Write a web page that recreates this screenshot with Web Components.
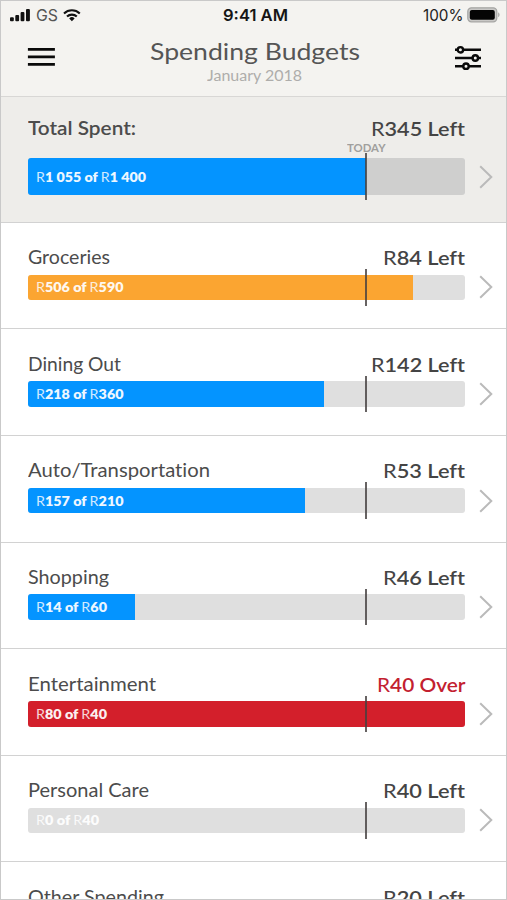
<!DOCTYPE html>
<html lang="en">
<head>
<meta charset="utf-8">
<title>Spending Budgets</title>
<style>
html, body { margin: 0; padding: 0; }
body { width: 507px; height: 900px; overflow: hidden; background: #fff; font-family: Lato, "Open Sans", sans-serif; color: #484848; font-variant-ligatures: none; }
</style>
</head>
<body>
<budget-app></budget-app>
<script>
/* Text run that is widened or narrowed to span a given width. */
class FitText extends HTMLElement {
  constructor() {
    super();
    this.attachShadow({ mode: 'open' }).innerHTML =
      '<style>:host{display:inline-block;white-space:nowrap;text-align:left}span{display:inline-block;transform-origin:0 50%}</style><span><slot></slot></span>';
  }
  connectedCallback() {
    const w = parseFloat(this.getAttribute('w'));
    if (!w) return;
    const span = this.shadowRoot.querySelector('span');
    const natural = span.getBoundingClientRect().width;
    if (!natural) return;
    span.style.transform = 'scaleX(' + w / natural + ')';
    this.style.width = w + 'px';
  }
}

class StatusBar extends HTMLElement {
  constructor() {
    super();
    this.attachShadow({ mode: 'open' }).innerHTML = `
<style>
:host { display: grid; grid-template-columns: 1fr auto 1fr; align-items: center; height: 26px; padding: 0 7px 0 10px; font: 16px/26px Inter, "Liberation Sans", sans-serif; color: #222; }
div { display: flex; align-items: center; }
.l { gap: 5px; } .r { justify-content: flex-end; gap: 4px; }
.gs { color: #555; } .t { font-weight: 600; color: #151515; }
svg { display: block; }
</style>
<div class="l">
  <svg width="21" height="14" fill="#111"><rect x="0" y="9.3" width="3.8" height="4" rx="1"/><rect x="5.3" y="7" width="3.8" height="6.3" rx="1"/><rect x="10.6" y="4" width="3.8" height="9.3" rx="1"/><rect x="16" y="1" width="3.9" height="12.3" rx="1"/></svg>
  <fit-text class="gs" w="22">GS</fit-text>
  <svg width="18" height="14" viewBox="0 0 18 14" fill="none" stroke="#111" stroke-width="2.1"><path d="M1 5.4a11.6 11.6 0 0 1 15.8 0M4 8.6a7 7 0 0 1 9.8 0"/><path d="M8.9 13.2 6.2 10.4a3.9 3.9 0 0 1 5.4 0z" fill="#111" stroke="none"/></svg>
</div>
<div class="t"><fit-text w="65">9:41 AM</fit-text></div>
<div class="r">
  <fit-text w="40.5">100%</fit-text>
  <svg width="33" height="16"><rect x=".8" y=".8" width="29" height="14" rx="3.6" fill="#c9c8c6" stroke="#a5a5a3" stroke-width="1.2"/><rect x="2.8" y="2.9" width="25" height="9.8" rx="2" fill="#050505"/><path d="M31.2 5.2a3 3 0 0 1 0 5z" fill="#a5a5a3"/></svg>
</div>`;
  }
}

class NavBar extends HTMLElement {
  constructor() {
    super();
    this.attachShadow({ mode: 'open' }).innerHTML = `
<style>
:host { display: grid; grid-template-columns: 28px 1fr 28px; padding: 0 25px 0 27px; height: 68.5px; box-sizing: border-box; }
svg { display: block; }
.m { text-align: center; }
.h { font-size: 24px; line-height: 28px; padding-top: 8.5px; color: #555; }
.s { font-size: 14.5px; line-height: 16px; padding-top: 3px; color: #aeadab; }
</style>
<svg width="28" height="50" stroke="#0a0a0a" stroke-width="2.7"><path d="M.9 21.3h27M.9 28.8h27M.9 36.4h27"/></svg>
<div class="m"><div class="h"><fit-text w="210">Spending Budgets</fit-text></div><div class="s"><fit-text w="95">January 2018</fit-text></div></div>
<svg width="28" height="50" stroke="#0a0a0a" stroke-width="2.4" fill="#f4f3f0"><path d="M1 21.8h26M1 30h26M1 38.2h26"/><circle cx="6.4" cy="21.8" r="2.7"/><circle cx="21.3" cy="30" r="2.7"/><circle cx="12" cy="38.2" r="2.7"/></svg>`;
  }
}

class BudgetRow extends HTMLElement {
  connectedCallback() {
    const g = k => this.getAttribute(k);
    const total = this.hasAttribute('total');
    const money = s => s.replace(/R(?=\d)/g, '<i>R</i>');
    this.attachShadow({ mode: 'open' }).innerHTML = `
<style>
:host { display: grid; grid-template-columns: 437px auto; grid-template-rows: 51.9px 25.5px; column-gap: 14px; height: 106.6px; box-sizing: border-box; padding-left: 28px; border-bottom: 1.6px solid #d2d2d2; flex: none; }
:host([total]) { grid-template-rows: 61.9px 36.4px; height: 126.3px; background: #eeedea; }
.top { display: flex; justify-content: space-between; align-items: flex-start; padding-top: 20.4px; font-size: 20px; line-height: 26px; }
:host([total]) .top { padding-top: 17px; }
.name { color: #4c4c4c; } :host([total]) .name { font-weight: 600; }
.amt { font-weight: 600; color: #444; padding-top: 1px; }
:host([over]) .amt { color: #c3202f; }
i { font-style: normal; font-weight: 400; }
.bar { position: relative; grid-row: 2; border-radius: 3px; background: #dfdfdf; }
:host([total]) .bar { background: #cfcfce; }
.fill { height: 100%; width: ${g('fill')}px; background: ${g('color') || '#0494ff'}; border-radius: 3px ${g('fill') === '437' ? '3px 3px' : '0 0'} 3px; display: flex; align-items: center; white-space: nowrap; }
.fill fit-text { margin-left: 8px; font-size: 13px; line-height: 16px; font-weight: 800; color: #fff; opacity: .93; flex: none; }
.fill i { opacity: .88; }
.tick { position: absolute; left: 337.2px; top: -5.4px; bottom: -5.4px; width: 1.7px; background: rgba(70,65,65,.82); }
.today { position: absolute; left: 318.5px; top: -17.5px; font-size: 10.5px; line-height: 14px; font-weight: 700; color: #a09f9d; }
svg { grid-row: 2; align-self: center; display: block; }
</style>
<div class="top"><fit-text class="name" w="${g('nw')}">${g('name')}</fit-text><fit-text class="amt" w="${g('aw')}">${money(g('amount'))}</fit-text></div>
<div class="bar"><div class="fill"><fit-text w="${g('tw')}">${money(g('text'))}</fit-text></div><div class="tick"></div>${total ? '<fit-text class="today" w="38.5">TODAY</fit-text>' : ''}</div>
<svg width="14" height="24" fill="none" stroke="#bababa" stroke-width="2"><path d="M1.2 1.2 12.3 12 1.2 22.8"/></svg>`;
  }
}

class BudgetApp extends HTMLElement {
  constructor() {
    super();
    this.attachShadow({ mode: 'open' }).innerHTML = `
<style>
:host { display: block; position: relative; width: 507px; height: 900px; overflow: hidden; background: #fff; }
:host::after { content: ""; position: absolute; inset: 0; border: solid #c9c9c9; border-width: 1px 1px 1px 1.5px; pointer-events: none; }
header { background: #f4f3f0; height: 96.5px; box-sizing: border-box; padding-top: 2px; border-bottom: 1.5px solid #d8d7d5; }
main { display: flex; flex-direction: column; }
</style>
<header><status-bar></status-bar><nav-bar></nav-bar></header>
<main>
<budget-row total name="Total Spent:" nw="108" amount="R345 Left" aw="94" text="R1 055 of R1 400" tw="110" fill="337.5"></budget-row>
<budget-row name="Groceries" nw="82" amount="R84 Left" aw="82" text="R506 of R590" tw="87.5" fill="384.5" color="#fba531"></budget-row>
<budget-row name="Dining Out" nw="93" amount="R142 Left" aw="94" text="R218 of R360" tw="87.5" fill="295.5"></budget-row>
<budget-row name="Auto/Transportation" nw="182" amount="R53 Left" aw="82" text="R157 of R210" tw="87.5" fill="276.5"></budget-row>
<budget-row name="Shopping" nw="81" amount="R46 Left" aw="82" text="R14 of R60" tw="71" fill="106.5"></budget-row>
<budget-row over name="Entertainment" nw="128" amount="R40 Over" aw="88.5" text="R80 of R40" tw="71" fill="437" color="#d31f2b"></budget-row>
<budget-row name="Personal Care" nw="121" amount="R40 Left" aw="82" text="R0 of R40" tw="63" fill="0"></budget-row>
<budget-row name="Other Spending" nw="136" amount="R20 Left" aw="82" text="" tw="0" fill="0"></budget-row>
</main>`;
  }
}
customElements.define('fit-text', FitText);
customElements.define('status-bar', StatusBar);
customElements.define('nav-bar', NavBar);
customElements.define('budget-row', BudgetRow);
customElements.define('budget-app', BudgetApp);
</script>
</body>
</html>
